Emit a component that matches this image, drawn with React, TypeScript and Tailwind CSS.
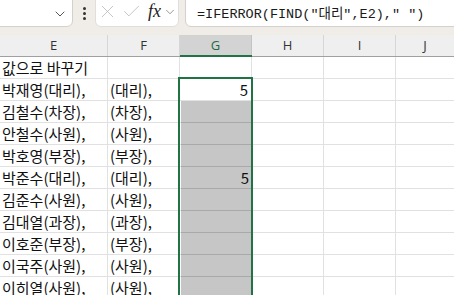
import { ChevronDown, X, Check } from "lucide-react";

const names: [string, string, string][] = [
    ["박재영(대리),", "(대리),", "5"],
    ["김철수(차장),", "(차장),", ""],
    ["안철수(사원),", "(사원),", ""],
    ["박호영(부장),", "(부장),", ""],
    ["박준수(대리),", "(대리),", "5"],
    ["김준수(사원),", "(사원),", ""],
    ["김대열(과장),", "(과장),", ""],
    ["이호준(부장),", "(부장),", ""],
    ["이국주(사원),", "(사원),", ""],
    ["이히열(사원),", "(사원),", ""],
];

const cellFont = { fontFamily: '"Noto Sans CJK KR", "Noto Sans", sans-serif' };

// 한 줄 (행) - E, F, G, H, I, J
function Row({ e, f, g, filled }: { e: string; f: string; g: string; filled?: boolean }) {
    return (
        <div className="flex h-[22px] text-[15px] text-[#111]" style={cellFont}>
            <div className="w-[108px] shrink-0 border-r border-b border-[#e1e1e1] pl-[2px] flex items-center leading-none whitespace-nowrap overflow-hidden">
                {e}
            </div>
            <div className="w-[72px] shrink-0 border-r border-b border-[#e1e1e1] pl-[2px] flex items-center leading-none whitespace-nowrap overflow-hidden">
                {f}
            </div>
            <div className="w-[72px] shrink-0 border-r border-b border-[#e1e1e1] flex items-stretch">
                {filled ? (
                    <div className="flex-1 ml-px bg-[#c6c6c6] border-b border-[#a9a9a9] -mb-px flex items-center justify-end pr-[2px] leading-none">
                        {g}
                    </div>
                ) : (
                    <div className="flex-1 flex items-center justify-end pr-[3px] leading-none">{g}</div>
                )}
            </div>
            <div className="w-[72px] shrink-0 border-r border-b border-[#e1e1e1]" />
            <div className="w-[72px] shrink-0 border-r border-b border-[#e1e1e1]" />
            <div className="flex-1 border-b border-[#e1e1e1]" />
        </div>
    );
}

export default function App() {
    return (
        <div className="relative w-[454px] h-[295px] overflow-hidden bg-white">
            {/* 수식 입력줄 */}
            <div className="h-[35px] bg-[#f0ece7] flex items-start">
                <div className="-mt-[6px] -ml-[8px] w-[81px] h-[33px] bg-white border border-[#d4d0cc] rounded-md flex items-end justify-end pb-[4px] pr-[4px]">
                    <ChevronDown size={16} strokeWidth={1.5} className="text-[#555]" />
                </div>
                <div className="w-[22px] h-[27px] flex items-center justify-center">
                    <div className="flex flex-col gap-[2px]">
                        <span className="w-[3px] h-[3px] bg-[#333] rounded-full" />
                        <span className="w-[3px] h-[3px] bg-[#333] rounded-full" />
                        <span className="w-[3px] h-[3px] bg-[#333] rounded-full" />
                    </div>
                </div>
                <div className="-mt-[6px] w-[84px] h-[33px] bg-white border border-[#e2ded9] rounded-md flex items-end pb-[4px] pl-[1px]">
                    <X size={21} strokeWidth={0.9} className="text-[#b5b5b5]" />
                    <Check size={21} strokeWidth={0.9} className="text-[#b5b5b5] ml-[3px]" />
                    <span
                        className="ml-[6px] text-[18px] italic leading-none text-[#222] mb-[2px]"
                        style={{ fontFamily: '"Liberation Serif", serif' }}
                    >
                        fx
                    </span>
                    <ChevronDown size={14} strokeWidth={1.3} className="text-[#777] ml-[2px] mb-[3px]" />
                </div>
                <div className="-mt-[6px] ml-[6px] flex-1 -mr-[10px] h-[33px] bg-white border border-[#d4d0cc] rounded-md flex items-end pb-[5px] pl-[11px]">
                    <span
                        className="text-[13.5px] leading-none text-[#1a1a1a] whitespace-nowrap"
                        style={{ fontFamily: '"Liberation Mono", "Noto Sans CJK KR", monospace' }}
                    >
                        =IFERROR(FIND("대리",E2)," ")
                    </span>
                </div>
            </div>

            {/* 열 머리글 */}
            <div
                className="flex h-[22px] bg-[#efefef] border-b border-[#a0a0a0] text-[13px] text-[#333]"
                style={{ fontFamily: '"Open Sans", "Noto Sans", sans-serif' }}
            >
                <div className="w-[108px] shrink-0 border-r border-[#d6d6d6] flex items-center justify-center">E</div>
                <div className="w-[72px] shrink-0 border-r border-[#d6d6d6] flex items-center justify-center">F</div>
                <div className="w-[72px] shrink-0 bg-[#d3d3d3] border-r border-[#c4c4c4] flex items-center justify-center text-[#1d6b43] relative">
                    G
                    <div className="absolute left-0 right-[-1px] bottom-[-1px] h-[2px] bg-[#217346]" />
                </div>
                <div className="w-[72px] shrink-0 border-r border-[#d6d6d6] flex items-center justify-center">H</div>
                <div className="w-[72px] shrink-0 border-r border-[#d6d6d6] flex items-center justify-center">I</div>
                <div className="flex-1 flex items-center justify-center">J</div>
            </div>

            {/* 데이터 */}
            <Row e="값으로 바꾸기" f="" g="" />
            {names.map(([e, f, g], i) => (
                <Row key={i} e={e} f={f} g={g} filled={i > 0} />
            ))}

            {/* 선택 영역 테두리 */}
            <div className="absolute left-[178px] top-[77px] w-[75px] h-[240px] border-2 border-[#217346] pointer-events-none" />
        </div>
    );
}
